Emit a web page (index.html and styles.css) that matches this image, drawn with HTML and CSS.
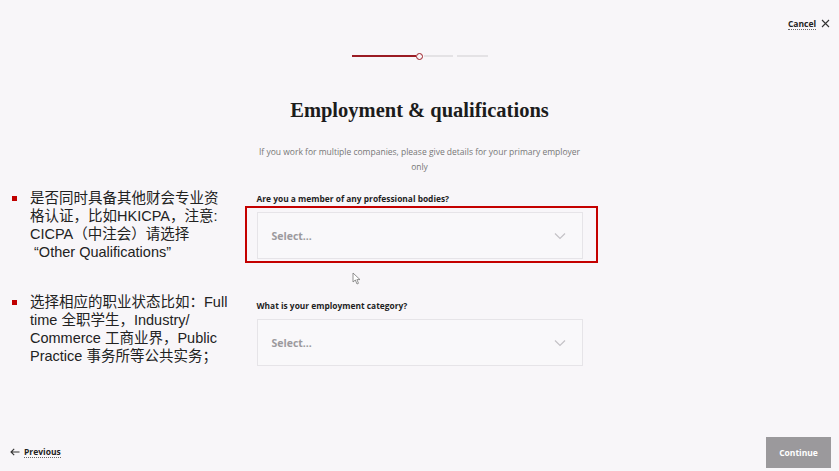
FILE: index.html
```html
<!DOCTYPE html>
<html lang="en">
<head>
<meta charset="utf-8">
<title>Employment &amp; qualifications</title>
<link rel="stylesheet" href="styles.css">
</head>
<body>
<div class="page">
  <header class="header">
    <a class="cancel" href="#">Cancel</a>
    <svg class="x-icon" width="9" height="9" viewBox="0 0 9 9"><path d="M1 1L8 8M8 1L1 8" stroke="#333" stroke-width="1.1" fill="none"/></svg>
  </header>
  <main class="main">
    <div class="progress">
      <span class="seg seg-done"></span>
      <span class="dot"></span>
      <span class="seg seg-todo"></span>
      <span class="seg seg-todo2"></span>
    </div>
    <h1 class="title">Employment &amp; qualifications</h1>
    <p class="subtitle">If you work for multiple companies, please give details for your primary employer<br>only</p>
    <div class="field">
      <label class="label">Are you a member of any professional bodies?</label>
      <div class="select"><span class="placeholder">Select...</span>
        <svg class="chev" width="12" height="8" viewBox="0 0 12 8"><path d="M1 1.5L6 6.5L11 1.5" stroke="#c4c2c6" stroke-width="1.2" fill="none"/></svg>
      </div>
    </div>
    <div class="field field2">
      <label class="label">What is your employment category?</label>
      <div class="select"><span class="placeholder">Select...</span>
        <svg class="chev" width="12" height="8" viewBox="0 0 12 8"><path d="M1 1.5L6 6.5L11 1.5" stroke="#c4c2c6" stroke-width="1.2" fill="none"/></svg>
      </div>
    </div>
  </main>
  <footer class="footer">
    <a class="prev" href="#">
      <svg class="arrow" width="10" height="8" viewBox="0 0 10 8"><path d="M9.5 4H1M4.2 0.8L1 4L4.2 7.2" stroke="#333" stroke-width="1.1" fill="none"/></svg>
      <span class="prev-text">Previous</span>
    </a>
    <button class="continue">Continue</button>
  </footer>

  <div class="notes">
    <div class="note">
      <span class="bullet"></span>
      <p class="note-text">是否同时具备其他财会专业资<br>格认证，比如HKICPA，注意:<br>CICPA（中注会）请选择<br>&nbsp;“Other Qualifications”</p>
    </div>
    <div class="note note2">
      <span class="bullet"></span>
      <p class="note-text">选择相应的职业状态比如：Full<br>time 全职学生，Industry/<br>Commerce 工商业界，Public<br>Practice 事务所等公共实务；</p>
    </div>
  </div>
  <div class="highlight"></div>
  <svg class="cursor" width="9" height="13" viewBox="0 0 9 13"><path d="M1 1L1 10L3.3 8L5 12L6.5 11.3L4.9 7.6L8 7.6Z" fill="#fff" stroke="#777" stroke-width="0.8"/></svg>
</div>
</body>
</html>
```
FILE: styles.css
```css
html, body {
  margin: 0;
  padding: 0;
}
body {
  background: #f8f6f9;
  font-family: "Open Sans", "Noto Sans", sans-serif;
  color: #222;
}
.page {
  position: relative;
  width: 839px;
  height: 471px;
  overflow: hidden;
  display: flex;
  flex-direction: column;
}
.header {
  height: 46px;
  box-sizing: border-box;
  display: flex;
  justify-content: flex-end;
  align-items: flex-start;
  gap: 5px;
  padding: 18px 9px 0 0;
}
.cancel {
  font-size: 8.5px;
  font-weight: 700;
  color: #222;
  text-decoration: none;
  border-bottom: 1px dotted #666;
  line-height: 11px;
}
.x-icon {
  margin-top: 1px;
}
.main {
  flex: 1;
  width: 326px;
  margin: 0 auto;
  display: flex;
  flex-direction: column;
}
.progress {
  height: 20px;
  display: flex;
  align-items: center;
  justify-content: center;
}
.seg {
  height: 2px;
  display: block;
}
.seg-done {
  width: 64px;
  background: #9b1c24;
}
.dot {
  width: 5px;
  height: 5px;
  border: 1.5px solid #9b1c24;
  border-radius: 50%;
  background: #f8f6f9;
  display: block;
}
.seg-todo {
  width: 29px;
  background: #e4e2e5;
  margin-left: 1px;
}
.seg-todo2 {
  width: 31px;
  background: #e4e2e5;
  margin-left: 4px;
}
.title {
  margin: 30px 0 0;
  font-family: "Liberation Serif", "DejaVu Serif", serif;
  font-weight: 700;
  font-size: 20.5px;
  line-height: 28px;
  text-align: center;
  color: #1c1c1c;
}
.subtitle {
  margin: 20px -4px 0;
  font-size: 8.5px;
  line-height: 15px;
  color: #777;
  text-align: center;
}
.field {
  margin-top: 19px;
  display: flex;
  flex-direction: column;
}
.field2 {
  margin-top: 41px;
}
.label {
  font-size: 8.4px;
  font-weight: 700;
  line-height: 12px;
  color: #1e1e1e;
}
.select {
  margin-top: 7px;
  height: 47px;
  box-sizing: border-box;
  border: 1px solid #e6e4e8;
  background: #f9f8fa;
  display: flex;
  align-items: center;
  justify-content: space-between;
  padding: 0 16px 0 14px;
}
.placeholder {
  font-size: 10.5px;
  font-weight: 700;
  color: #9c9a9e;
}
.footer {
  height: 37px;
  display: flex;
  justify-content: space-between;
  align-items: center;
  padding: 0 8px 0 10px;
}
.prev {
  display: flex;
  align-items: center;
  gap: 4px;
  text-decoration: none;
  color: #222;
  margin-top: -2px;
}
.arrow {
  display: block;
}
.prev-text {
  font-size: 8.5px;
  font-weight: 700;
  border-bottom: 1px dotted #666;
  line-height: 11px;
}
.continue {
  width: 65px;
  height: 31px;
  border: none;
  background: #9b999c;
  color: #fff;
  font-family: "Open Sans", sans-serif;
  font-weight: 700;
  font-size: 8.5px;
  padding: 0;
}
.notes {
  position: absolute;
  left: 12px;
  top: 189px;
  display: flex;
  flex-direction: column;
  gap: 32px;
}
.note {
  display: flex;
  align-items: flex-start;
  gap: 13px;
}
.bullet {
  width: 5px;
  height: 5px;
  background: #c00000;
  margin-top: 7px;
  flex: none;
}
.note-text {
  margin: 0;
  font-family: "Liberation Sans", "Noto Sans CJK SC", sans-serif;
  font-size: 14.5px;
  line-height: 18px;
  color: #222;
}
.highlight {
  position: absolute;
  left: 245px;
  top: 206px;
  width: 349px;
  height: 53px;
  border: 2px solid #c40000;
}
.cursor {
  position: absolute;
  left: 352px;
  top: 272px;
}
```
